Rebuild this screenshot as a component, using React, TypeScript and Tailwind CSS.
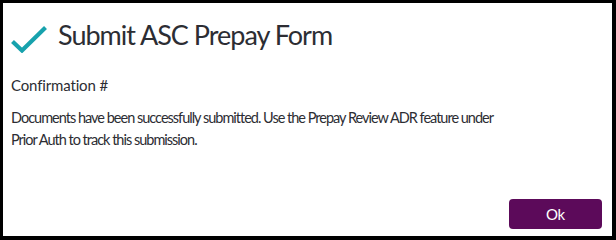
import React from "react";

const App: React.FC = () => {
  return (
    <div
      className="w-[616px] h-[240px] bg-black pt-[3px] pl-[3px] pr-[4px] pb-[4px]"
      style={{ fontFamily: "Lato, 'Open Sans', sans-serif" }}
    >
      <div className="h-full bg-white flex flex-col px-[7px]">
        <div className="flex items-start mt-[17.5px]">
          <svg width="38" height="28" viewBox="0 0 38 28" className="mt-[4.5px] shrink-0">
            <path
              d="M2.5 16.5 L12 25.5 L35.5 2.5"
              fill="none"
              stroke="#17a2ad"
              strokeWidth="4.2"
            />
          </svg>
          <span className="ml-[10px] text-[27px] text-[#2c2d33] leading-none tracking-[-1px]">
            Submit ASC Prepay Form
          </span>
        </div>
        <div className="mt-[20.5px] pl-[1px] text-[15px] text-[#2c2d33] leading-[22px] tracking-[-0.15px]">
          Confirmation #
        </div>
        <p className="mt-[11.5px] pl-[1px] text-[14.5px] text-[#2c2d33] leading-[22px] w-[500px] tracking-[-1px]">
          Documents have been successfully submitted. Use the Prepay Review ADR
          feature under Prior Auth to track this submission.
        </p>
        <div className="mt-auto mb-[7px] flex justify-end pr-[3px]">
          <button className="w-[93px] h-[30px] rounded-[4px] bg-[#5c0a5a] text-white text-[15px] tracking-[-0.3px]">
            Ok
          </button>
        </div>
      </div>
    </div>
  );
};

export default App;
